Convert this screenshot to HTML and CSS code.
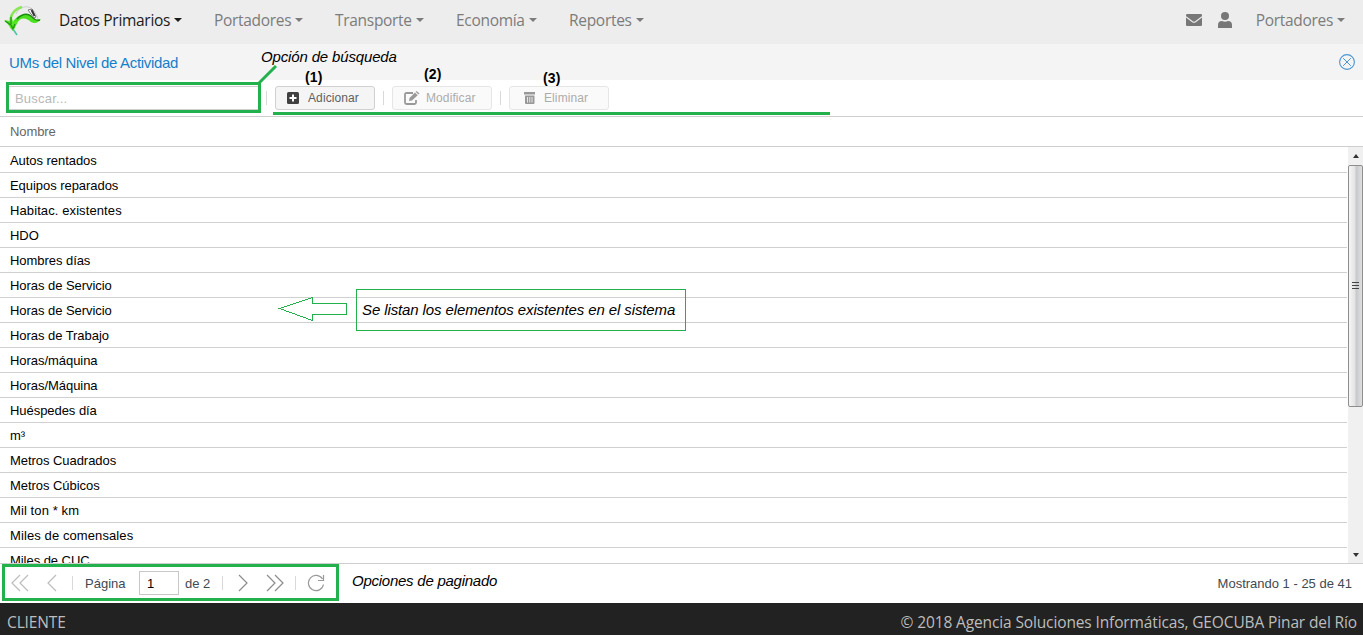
FILE: index.html
```html
<!DOCTYPE html>
<html lang="es">
<head>
<meta charset="utf-8">
<title>UMs del Nivel de Actividad</title>
<link rel="stylesheet" href="styles.css">
</head>
<body>
<div class="app">
  <header class="nav">
    <svg class="logo" width="38" height="32" viewBox="0 0 38 32" fill="none">
      <path d="M12 10C14 4 20 2 24 3c5 1 8 6 10 12" stroke="#ccc" stroke-width="1"/>
      <path d="M7 20C5 12 10 5 18 3" stroke="#8be65a" stroke-width="2.5"/>
      <path d="M8 22C8 16 16 8 26 11c3 2 4 4 6 5l5-1c-3 4-6 5-10 3-5-5-11-5-15 2l-2 5z" fill="#4ae01c"/>
      <path d="M13 15c5-5 10-6 14-3 3 3 5 5 9 4" stroke="#1d8a12" stroke-width="1.4"/>
      <path d="M0 16l6 1 1-7 2 8 6-2-6 11C6 25 5 20 0 16z" fill="#54e622"/>
      <path d="M1 17l6 4 2 4 2-5M7 13v7" stroke="#1f9412" stroke-width="1.2"/>
      <path d="M24 6l4-1 4 8-2 1z" fill="#fff" stroke="#777"/>
      <path d="M27.500 6l3 6" stroke="#333" stroke-width="1.8"/>
      <path d="M9 25l4 6" stroke="#4cc0a4" stroke-width="1.5"/>
    </svg>
    <nav class="menu">
      <a class="m1 active"><span>Datos Primarios</span><i class="caret"></i></a>
      <a class="m2"><span>Portadores</span><i class="caret"></i></a>
      <a class="m3"><span>Transporte</span><i class="caret"></i></a>
      <a class="m4"><span>Economía</span><i class="caret"></i></a>
      <a class="m5"><span>Reportes</span><i class="caret"></i></a>
    </nav>
    <svg class="mail" width="16" height="12" viewBox="0 0 16 12"><rect width="16" height="12" rx="1.2" fill="#777"/><path d="M0 2.700l6.500 5q1.500 1 3 0l6.500-5" fill="none" stroke="#eee" stroke-width="1.1"/></svg>
    <svg class="user" width="14" height="16" viewBox="0 0 14 16" fill="#777"><circle cx="7" cy="4" r="4"/><path d="M0 16v-3q0-4 4-4 3 1.500 6 0 4 0 4 4v3z"/></svg>
    <a class="account"><span>Portadores</span><i class="caret"></i></a>
  </header>
  <div class="titlebar">
    <h1>UMs del Nivel de Actividad</h1>
    <svg width="16" height="16" viewBox="0 0 16 16" fill="none" stroke="#4b94cf"><circle cx="8" cy="8" r="7.400" stroke-width="1.1"/><path d="M4.200 4.200l7.600 7.600M11.800 4.200l-7.600 7.600"/></svg>
  </div>
  <div class="toolbar">
    <div class="search">Buscar...</div>
    <i class="sep"></i>
    <div class="btn"><svg width="12" height="12" viewBox="0 0 12 12"><rect width="12" height="12" rx="1.5" fill="#404040"/><path d="M6 2.500v7M2.500 6h7" stroke="#fff" stroke-width="2"/></svg><span>Adicionar</span></div>
    <i class="sep"></i>
    <div class="btn off edit"><svg width="16" height="14" viewBox="0 0 16 14"><path d="M9 2H2.500Q1 2 1 3.500v8Q1 13 2.500 13h8Q12 13 12 11.500V9" fill="none" stroke="#999" stroke-width="1.8"/><path d="M5 10l.5-3L11 1.500l2.700 2.700L8 9.600zM11.700.8l.8-.8 3 2.600-1 1z" fill="#999"/></svg><span>Modificar</span></div>
    <i class="sep"></i>
    <div class="btn off del"><svg width="12" height="14" viewBox="0 0 12 14"><path d="M0 1h11v2.500H0zM1 4.500h9.500V12q0 1-1 1H2q-1 0-1-1z" fill="#999"/><path d="M3.500 6v5.500M5.750 6v5.500M8 6v5.500" stroke="#e8e8e8"/></svg><span>Eliminar</span></div>
  </div>
  <div class="colhead">Nombre</div>
  <main class="grid">
    <div class="rows">
      <div class="row">Autos rentados</div>
      <div class="row">Equipos reparados</div>
      <div class="row wide">Habitac. existentes</div>
      <div class="row">HDO</div>
      <div class="row">Hombres días</div>
      <div class="row">Horas de Servicio</div>
      <div class="row">Horas de Servicio</div>
      <div class="row">Horas de Trabajo</div>
      <div class="row">Horas/máquina</div>
      <div class="row">Horas/Máquina</div>
      <div class="row">Huéspedes día</div>
      <div class="row">m³</div>
      <div class="row">Metros Cuadrados</div>
      <div class="row">Metros Cúbicos</div>
      <div class="row wide">Mil ton * km</div>
      <div class="row wide">Miles de comensales</div>
      <div class="row">Miles de CUC</div>
    </div>
    <div class="scroll">
      <i class="up"></i>
      <div class="thumb"><i></i><i></i><i></i></div>
      <i class="down"></i>
    </div>
  </main>
  <div class="pager">
    <svg width="72" height="20" viewBox="0 0 72 20" fill="none" stroke="#bdbdbd" stroke-width="1.200"><path d="M20 2l-8 8 8 8M28 2l-8 8 8 8M56 2l-8 8 8 8"/></svg>
    <i class="sep"></i>
    <span class="pg">Página</span>
    <span class="num">1</span>
    <span class="of">de 2</span>
    <i class="sep"></i>
    <svg width="72" height="20" viewBox="0 0 72 20" fill="none" stroke="#8c8c8c" stroke-width="1.200"><path d="M16 2l8 8-8 8M44 2l8 8-8 8M52 2l8 8-8 8"/></svg>
    <i class="sep"></i>
    <svg class="reload" width="18" height="18" viewBox="0 0 18 18" fill="none" stroke="#999" stroke-width="1.2"><path d="M15.500 5A7.600 7.600 0 1 0 16.500 10.500M16.500 1v5.500H11"/></svg>
    <span class="status">Mostrando 1 - 25 de 41</span>
  </div>
  <footer class="foot"><span class="client">CLIENTE</span><span class="copy">© 2018 Agencia Soluciones Informáticas, GEOCUBA Pinar del Río</span></footer>

  <svg class="marks" width="1363" height="635" viewBox="0 0 1363 635" fill="none" stroke="#22b14c">
    <g stroke-width="3"><rect x="7.500" y="83.500" width="252" height="28"/><path d="M259 83l17-17M273 113.500h557"/><rect x="3.500" y="565.500" width="334" height="34"/></g>
    <g shape-rendering="crispEdges"><rect x="356.500" y="289.500" width="329" height="41"/><path d="M279.500 308.500l33-11v6h34v11h-34v6z"/></g>
  </svg>
  <span class="note n-search">Opción de búsqueda</span>
  <span class="note n-list">Se listan los elementos existentes en el sistema</span>
  <span class="note n-page">Opciones de paginado</span>
  <b class="tag t1">(1)</b><b class="tag t2">(2)</b><b class="tag t3">(3)</b>
</div>
</body>
</html>
```
FILE: styles.css
```css
* { box-sizing: border-box; }
body { margin: 0; font: 13px "Liberation Sans", sans-serif; background: #fff; }
.app { position: relative; width: 1363px; height: 635px; overflow: hidden; display: flex; flex-direction: column; }
.app > * { flex-shrink: 0; }
.nav { height: 44px; background: #ededed; display: flex; align-items: center; padding: 0 18px 5px 4px; font: 15.5px/24px "Open Sans", sans-serif; letter-spacing: -.3px; color: #7c7c7c; }
.logo { margin-right: 17px; }
.menu { display: flex; flex: 1; }
.menu a { display: flex; align-items: center; white-space: nowrap; }
.menu .active { color: #1b1b1b; }
.m1 { width: 155px; }
.m2 { width: 121px; }
.m3 { width: 121px; }
.m4 { width: 113px; }
.caret { border: 4px solid transparent; border-top-color: currentColor; border-bottom: 0; margin-left: 4px; }
.mail { margin-right: 16px; }
.user { margin-right: 24px; }
.account { display: flex; align-items: center; }
.titlebar { height: 36px; background: #f4f4f4; display: flex; align-items: center; justify-content: space-between; padding: 0 8px 0 9px; }
.titlebar h1 { margin: 0; font-size: 15px; font-weight: normal; color: #157fcc; line-height: 20px; padding-top: 2px; letter-spacing: -.33px; }
.toolbar { height: 37px; border-bottom: 1px solid #cecece; display: flex; align-items: center; padding: 0 8px; }
.search { width: 251px; height: 24px; border: 1px solid #cecece; color: #b8b8b8; padding: 1px 6px; line-height: 22px; letter-spacing: .2px; }
.sep { width: 1px; height: 14px; background: #d9d9d9; }
.search + .sep { margin-left: 7px; }
.btn { width: 100px; height: 24px; margin: 0 8px; border: 1px solid #d0d0d0; border-radius: 3px; background: #f5f5f5; color: #606060; display: flex; align-items: center; padding-left: 11px; gap: 9px; font-size: 12px; letter-spacing: .1px; }
.off { background: #fafafa; border-color: #e6e6e6; color: #acacac; }
.edit { gap: 6px; }
.del { padding-left: 14px; gap: 8px; }
.colhead { height: 30px; border-bottom: 1px solid #cecece; color: #666; padding: 0 10px; line-height: 29px; letter-spacing: -.1px; }
.grid { height: 416px; display: flex; overflow: hidden; }
.rows { width: 1347px; margin-right: 1px; padding-top: 1px; }
.row { height: 25px; border-bottom: 1px solid #d0d0d0; padding-left: 10px; line-height: 25px; color: #000; letter-spacing: -.05px; }
.wide { letter-spacing: .1px; }
.scroll { width: 15px; background: #f0f0f0; display: flex; flex-direction: column; align-items: center; padding: 7px 0 6px; }
.up, .down { border: 3.5px solid transparent; flex-shrink: 0; }
.up { border-bottom: 4px solid #333; border-top: 0; margin-bottom: 7px; }
.down { border-top: 4px solid #333; border-bottom: 0; margin-top: auto; }
.thumb { width: 15px; height: 242px; border: 1px solid #8e8e8e; border-radius: 2px; background: linear-gradient(90deg, #f5f5f5, #e3e3e3 45%, #c7c8cb 55%, #e0e0e0); display: flex; flex-direction: column; justify-content: center; gap: 2px; align-items: center; padding-bottom: 2px; }
.thumb i { width: 7px; height: 1px; background: #444; }
.pager { height: 40px; border-top: 1px solid #cecece; display: flex; align-items: center; color: #404a54; padding: 0 11px 1px 0; }
.pg { margin-left: 12px; width: 54px; }
.num { width: 40px; height: 24px; border: 1px solid #c8c8c8; color: #000; line-height: 24px; padding-left: 7px; }
.of { margin-left: 6px; width: 37px; }
.reload { margin-left: 11px; }
.status { margin-left: auto; }
.foot { height: 32px; background: #222; color: #bdbdbd; display: flex; justify-content: space-between; padding: 6px 6px 0 7px; font: 15.5px/26px "Open Sans", sans-serif; letter-spacing: -.13px; }
.marks { position: absolute; left: 0; top: 0; }
.note, .tag { position: absolute; color: #000; white-space: nowrap; line-height: 18px; }
.note { font-size: 15px; font-style: italic; }
.tag { font-size: 14px; }
.n-search { left: 261px; top: 48px; letter-spacing: -.15px; }
.n-list { left: 362px; top: 301px; letter-spacing: -.11px; }
.n-page { left: 352px; top: 572px; letter-spacing: -.25px; }
.t1 { left: 305px; top: 68px; letter-spacing: .2px; }
.t2 { left: 424px; top: 65px; letter-spacing: .2px; }
.t3 { left: 543px; top: 69px; letter-spacing: .2px; }
```
